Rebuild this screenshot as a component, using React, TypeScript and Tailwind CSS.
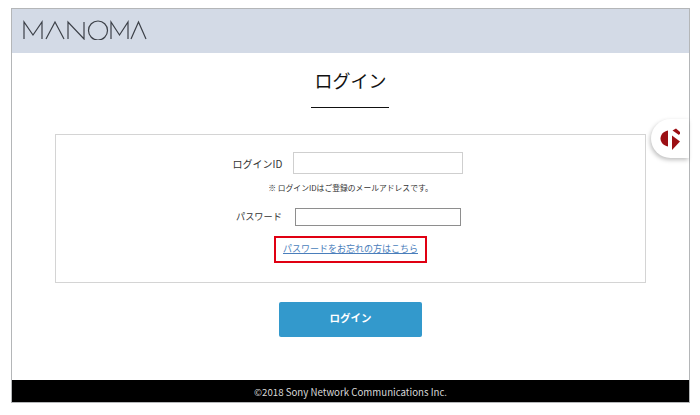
export default function App() {
  const font = "font-['Noto_Sans_CJK_JP','Noto_Sans',sans-serif]";
  return (
    <div className={`w-[700px] h-[415px] bg-white pt-2 pl-[11px] ${font}`}>
      <div className="relative w-[679px] h-[395px] border border-[#b4b6b8] flex flex-col">
        <header className="h-[44px] bg-[#d3dae6] flex items-center pl-[11px] pb-[2px] shrink-0">
          <svg width="124" height="20" viewBox="0 0 124 20" fill="none" stroke="#3c4048" strokeWidth="1.2" role="img" aria-label="MANOMA">
            <path d="M1 19V2l9 13 9-13v17" />
            <path d="M23 19 32 2l9 17" />
            <path d="M45 19V2l16 17V2" />
            <circle cx="75" cy="10.500" r="9.500" />
            <path d="M88 19V2l8.500 13L105 2v17" />
            <path d="M108 19 115.500 2l7.500 17" />
          </svg>
        </header>
        <main className="flex-1 flex flex-col items-center min-h-0">
          <h1 className="mt-[14px] text-[18px] leading-[26px] text-[#111]">ログイン</h1>
          <div className="mt-[14px] w-[78px] h-px bg-[#111] -translate-x-px" />
          <section className="mt-[26px] w-[591px] h-[149px] border border-[#d4d4d4] flex flex-col items-center shrink-0">
            <div className="mt-[17px] flex items-center -translate-x-[3px]">
              <label className="w-[60px] text-[10px] text-[#333] whitespace-nowrap">ログインID</label>
              <div className="w-[170px] h-[22px] border border-[#cfcfcf] bg-white" />
            </div>
            <p className="mt-[7px] text-[7.800px] leading-[13px] text-[#333]">※ ログインIDはご登録のメールアドレスです。</p>
            <div className="mt-[14px] flex items-center -translate-x-[2px]">
              <label className="w-[59px] text-[9.200px] text-[#333] whitespace-nowrap">パスワード</label>
              <div className="w-[166px] h-[18px] border border-[#8e8e8e] bg-white" />
            </div>
            <div className="mt-[10px] w-[153px] h-[27px] border-2 border-[#e00012] flex items-center justify-center pb-[2px]">
              <a className="text-[9px] text-[#4a7ebb] underline whitespace-nowrap">パスワードをお忘れの方はこちら</a>
            </div>
          </section>
          <button className="mt-[19px] w-[143px] h-[35px] bg-[#3399cc] rounded-[2px] text-white text-[10.500px] font-bold pb-[3px]">ログイン</button>
        </main>
        <footer className="h-[22px] bg-black text-[#d8d8d8] text-[9.700px] flex items-center justify-center shrink-0 pt-[2px]">
          ©2018 Sony Network Communications Inc.
        </footer>
        <div className="absolute right-0 top-[110px] w-[38px] h-[39px] bg-white rounded-l-[20px] shadow-[-1px_2px_4px_rgba(0,0,0,0.25)] flex items-center justify-center">
          <svg width="20" height="22" viewBox="0 0 20 22" fill="#9c0f14">
            <path d="M8 2.500C3 3.500.5 7 .5 10.500S3 17.500 8 18.500Z" />
            <path d="M12 7.500V22l8-8.500Z" />
            <path d="M12.500 2.500 16 .5l4.500 4-1.500 2.500Z" />
          </svg>
        </div>
      </div>
    </div>
  );
}
